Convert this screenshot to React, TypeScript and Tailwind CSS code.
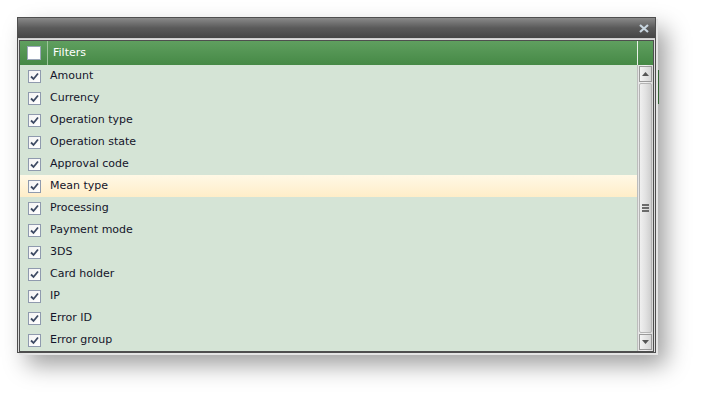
import React from "react";

const items = [
  "Amount",
  "Currency",
  "Operation type",
  "Operation state",
  "Approval code",
  "Mean type",
  "Processing",
  "Payment mode",
  "3DS",
  "Card holder",
  "IP",
  "Error ID",
  "Error group",
];

function Check({ checked }: { checked: boolean }) {
  return (
    <div className="w-[13px] h-[13px] border border-[#8f9aae] bg-gradient-to-br from-[#f4f4f4] to-white flex items-center justify-center">
      {checked && (
        <svg width="9" height="9" viewBox="0 0 9 9">
          <path d="M1 4.5 L3.5 7 L8 1.5" stroke="#3d4a63" strokeWidth="1.8" fill="none" />
        </svg>
      )}
    </div>
  );
}

export default function App() {
  return (
    <div className="relative w-[706px] h-[402px] bg-white overflow-hidden pl-[17px] pt-[17px] font-['DejaVu_Sans',Verdana,sans-serif]">
      {/* bit of the page behind the window */}
      <div className="absolute left-[656px] top-[70px] w-[3px] h-[34px] bg-[#4b8b4b]" />

      <div className="relative w-[639px] h-[336px] border border-[#4e4e4e] bg-[#dcdcdc] flex flex-col shadow-[2px_2px_0_#e4e4e4,10px_12px_22px_rgba(0,0,0,0.38)]">
        {/* title bar */}
        <div className="h-[21px] shrink-0 bg-gradient-to-b from-[#8a8a8a] via-[#5a5a5a] to-[#454545] flex items-center justify-end pr-[6px] border-b border-[#cfcfcf]">
          <svg width="10" height="9" viewBox="0 0 10 9">
            <path d="M1 1 L9 8 M9 1 L1 8" stroke="#c9d6e0" strokeWidth="2.2" />
          </svg>
        </div>

        <div className="flex-1 px-[1px] pb-[1px] pt-[1px] flex">
          <div className="flex-1 border border-[#4e4e4e] flex flex-col bg-[#d5e4d6] overflow-hidden">
            {/* header */}
            <div className="h-[24px] shrink-0 flex bg-gradient-to-b from-[#5f9f5f] to-[#468946]">
              <div className="w-[28px] border-r border-[#9cc49c] flex items-center justify-center">
                <div className="w-[14px] h-[14px] border border-[#9aa6b8] bg-white" />
              </div>
              <div className="flex-1 flex items-center pl-[5px] text-white text-[11px] font-medium">Filters</div>
              <div className="w-[16px] border-l border-[#e8f0e8]" />
            </div>

            <div className="flex-1 flex">
              <div className="flex-1 flex flex-col">
                {items.map((t) => (
                  <div
                    key={t}
                    className={
                      "h-[22px] shrink-0 flex items-center text-[11px] text-[#14142a] " +
                      (t === "Mean type" ? "bg-gradient-to-b from-[#fff8e6] to-[#ffedc8]" : "")
                    }
                  >
                    <div className="w-[28px] flex justify-center">
                      <Check checked />
                    </div>
                    <span className="pl-[2px]">{t}</span>
                  </div>
                ))}
              </div>

              {/* scrollbar */}
              <div className="w-[16px] border-l border-[#bdbdbd] bg-gradient-to-r from-[#e6e6e6] via-[#f2f2f2] to-[#d8d8d8] flex flex-col p-[1px]">
                <div className="h-[16px] border border-[#9a9a9a] bg-gradient-to-r from-[#f4f4f4] to-[#d6d6d6] flex items-center justify-center">
                  <svg width="7" height="6" viewBox="0 0 7 6">
                    <path d="M0 5 L3.5 1 L7 5 Z" fill="#555" />
                  </svg>
                </div>
                <div className="flex-1 my-[1px] border border-[#b4b4b4] rounded-[2px] bg-gradient-to-r from-[#f0f0f0] via-[#e2e2e2] to-[#cfcfcf] flex items-center justify-center">
                  <div className="flex flex-col gap-[1px]">
                    <div className="w-[7px] h-[2px] bg-[#6b6b6b]" />
                    <div className="w-[7px] h-[2px] bg-[#6b6b6b]" />
                    <div className="w-[7px] h-[2px] bg-[#6b6b6b]" />
                  </div>
                </div>
                <div className="h-[16px] border border-[#9a9a9a] bg-gradient-to-r from-[#f4f4f4] to-[#d6d6d6] flex items-center justify-center">
                  <svg width="7" height="6" viewBox="0 0 7 6">
                    <path d="M0 1 L3.5 5 L7 1 Z" fill="#555" />
                  </svg>
                </div>
              </div>
            </div>
          </div>
        </div>
      </div>
    </div>
  );
}
